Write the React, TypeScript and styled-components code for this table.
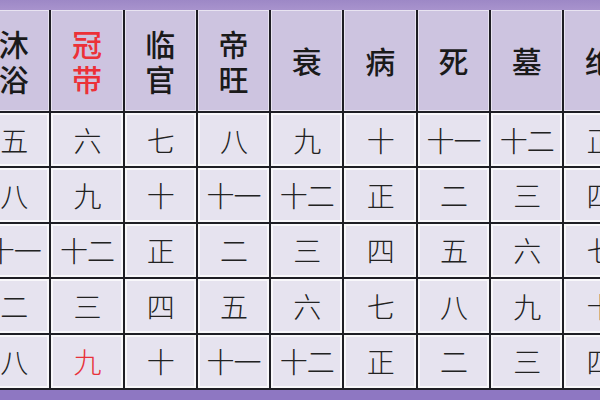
import styled, { createGlobalStyle } from 'styled-components';

const GlobalStyle = createGlobalStyle`
  html, body {
    margin: 0;
    padding: 0;
    background: #e6e3ef;
    overflow: hidden;
  }
`;

const headers = ['沐浴', '冠带', '临官', '帝旺', '衰', '病', '死', '墓', '绝'];

const rows = [
  ['五', '六', '七', '八', '九', '十', '十一', '十二', '正'],
  ['八', '九', '十', '十一', '十二', '正', '二', '三', '四'],
  ['十一', '十二', '正', '二', '三', '四', '五', '六', '七'],
  ['二', '三', '四', '五', '六', '七', '八', '九', '十'],
  ['八', '九', '十', '十一', '十二', '正', '二', '三', '四'],
];

// red cells: row-col
const redCells = ['4-1'];

const Page = styled.div`
  width: 600px;
  height: 400px;
  display: flex;
  flex-direction: column;
  overflow: hidden;
  font-family: "Noto Sans CJK SC", "Noto Sans", sans-serif;
`;

const TopBar = styled.div`
  height: 10px;
  flex-shrink: 0;
  background: linear-gradient(#9d88c6, #a893cd);
`;

const BottomBar = styled.div`
  flex: 1;
  background: #8e77c2;
`;

const Table = styled.div`
  margin-left: -22px;
  display: grid;
  grid-template-columns: repeat(9, 71.3px);
  grid-template-rows: 101px repeat(5, 53.4px);
  gap: 2px;
  padding-bottom: 2px;
  background: #1e1e24;
  width: max-content;
`;

const HeadCell = styled.div<{ $red?: boolean }>`
  background: #cdc4e0;
  box-shadow: inset 0 0 0 1px rgba(255, 255, 255, 0.55);
  display: flex;
  flex-direction: column;
  align-items: center;
  justify-content: center;
  font-size: 30px;
  line-height: 35px;
  font-weight: 500;
  color: ${({ $red }) => ($red ? '#ec3038' : '#1a1a1a')};
`;

const Cell = styled.div<{ $red?: boolean }>`
  background: #e6e3ef;
  box-shadow: inset 0 0 0 2px rgba(255, 255, 255, 0.7);
  display: flex;
  align-items: center;
  justify-content: center;
  font-size: 28px;
  font-weight: 300;
  letter-spacing: -1px;
  color: ${({ $red }) => ($red ? '#e8323a' : '#222')};
`;

export default function App() {
  return (
    <Page>
      <GlobalStyle />
      <TopBar />
      <Table>
        {headers.map((h, i) => (
          <HeadCell key={h} $red={i === 1}>
            {h.split('').map((c) => (
              <span key={c}>{c}</span>
            ))}
          </HeadCell>
        ))}
        {rows.map((row, r) =>
          row.map((v, c) => (
            <Cell key={`${r}-${c}`} $red={redCells.includes(`${r}-${c}`)}>
              {v}
            </Cell>
          )),
        )}
      </Table>
      <BottomBar />
    </Page>
  );
}
